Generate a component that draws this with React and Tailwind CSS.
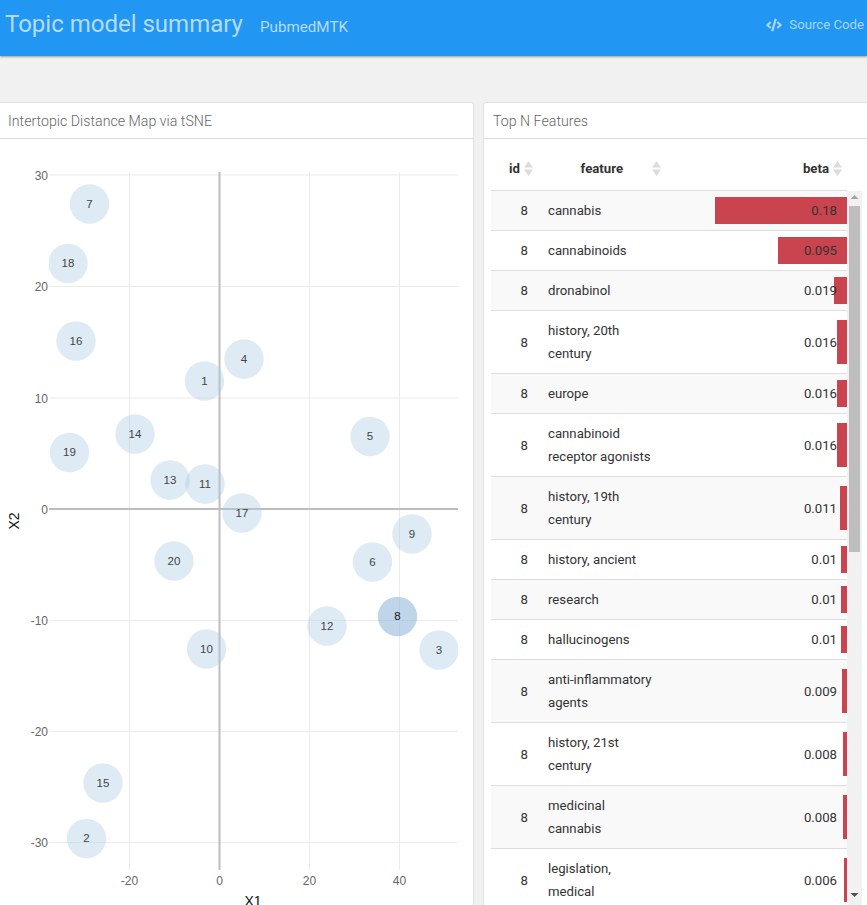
import React from "react";
import { FaCode } from "react-icons/fa";

const topics = [
  { id: 7, x: 89.5, y: 204 },
  { id: 18, x: 68, y: 263.5 },
  { id: 16, x: 76, y: 341 },
  { id: 4, x: 244, y: 359 },
  { id: 1, x: 204.5, y: 381 },
  { id: 14, x: 135, y: 434 },
  { id: 5, x: 370, y: 436.5 },
  { id: 19, x: 69.5, y: 452.5 },
  { id: 13, x: 170, y: 480 },
  { id: 11, x: 205, y: 484 },
  { id: 17, x: 242, y: 513 },
  { id: 9, x: 412, y: 534 },
  { id: 6, x: 372.5, y: 562 },
  { id: 20, x: 174, y: 561 },
  { id: 8, x: 397.5, y: 616.5, active: true },
  { id: 12, x: 327, y: 626 },
  { id: 10, x: 206.5, y: 649 },
  { id: 3, x: 439, y: 650 },
  { id: 15, x: 103, y: 783 },
  { id: 2, x: 86.5, y: 838.5 },
];

const features = [
  { name: ["cannabis"], beta: "0.18", bar: 132 },
  { name: ["cannabinoids"], beta: "0.095", bar: 69 },
  { name: ["dronabinol"], beta: "0.019", bar: 13 },
  { name: ["history, 20th", "century"], beta: "0.016", bar: 10 },
  { name: ["europe"], beta: "0.016", bar: 10 },
  { name: ["cannabinoid", "receptor agonists"], beta: "0.016", bar: 10 },
  { name: ["history, 19th", "century"], beta: "0.011", bar: 7 },
  { name: ["history, ancient"], beta: "0.01", bar: 6 },
  { name: ["research"], beta: "0.01", bar: 6 },
  { name: ["hallucinogens"], beta: "0.01", bar: 6 },
  { name: ["anti-inflammatory", "agents"], beta: "0.009", bar: 5 },
  { name: ["history, 21st", "century"], beta: "0.008", bar: 4 },
  { name: ["medicinal", "cannabis"], beta: "0.008", bar: 4 },
  { name: ["legislation,", "medical"], beta: "0.006", bar: 3 },
];

const xTicks = [
  { label: "-20", x: 129.5 },
  { label: "0", x: 219.5 },
  { label: "20", x: 309.5 },
  { label: "40", x: 399.5 },
];

const yTicks = [
  { label: "30", y: 175 },
  { label: "20", y: 286.5 },
  { label: "10", y: 398 },
  { label: "0", y: 509 },
  { label: "-10", y: 620.5 },
  { label: "-20", y: 731.5 },
  { label: "-30", y: 842.5 },
];

function SortIcon() {
  return (
    <svg width="9" height="15" viewBox="0 0 9 15" className="shrink-0 fill-[#dcdcdc]">
      <path d="M4.5 0 L9 6.5 L0 6.5 Z" />
      <path d="M0 8.5 L9 8.5 L4.5 15 Z" />
    </svg>
  );
}

function TopicMap() {
  return (
    <svg width="473" height="766" viewBox="0 139 473 766" className="block font-['Liberation_Sans',sans-serif]">
      <defs>
        <clipPath id="plot">
          <rect x="49" y="172" width="409" height="698" />
        </clipPath>
      </defs>
      {xTicks.map((t) => (
        <g key={t.label}>
          {t.label !== "0" && <line x1={t.x} x2={t.x} y1="172" y2="870" stroke="#ebebeb" />}
          <text x={t.x} y="884.5" textAnchor="middle" fontSize="12" fill="#666666">{t.label}</text>
        </g>
      ))}
      {yTicks.map((t) => (
        <g key={t.label}>
          {t.label !== "0" && <line x1="49" x2="458" y1={t.y} y2={t.y} stroke="#ebebeb" />}
          <text x="48" y={t.y + 4.5} textAnchor="end" fontSize="12" fill="#666666">{t.label}</text>
        </g>
      ))}
      <line x1="219.5" x2="219.5" y1="172" y2="870" stroke="#bdbdbd" strokeWidth="2" />
      <line x1="49" x2="458" y1="509" y2="509" stroke="#bdbdbd" strokeWidth="2" />
      <g clipPath="url(#plot)">
        {topics.map((t) => (
          <g key={t.id}>
            <circle cx={t.x} cy={t.y} r="19.7" fill={t.active ? "#94bbdc" : "#adcbe4"} fillOpacity={t.active ? 0.6 : 0.4} />
            <text x={t.x} y={t.y + 3.5} textAnchor="middle" fontSize="11.5" fill={t.active ? "#111111" : "#444444"}>{t.id}</text>
          </g>
        ))}
      </g>
      <text x="253" y="906" textAnchor="middle" fontSize="14" fill="#111111">X1</text>
      <text x="19" y="521" textAnchor="middle" fontSize="14" fill="#111111" transform="rotate(-90 19 521)">X2</text>
    </svg>
  );
}

function FeatureRow({ row, index }) {
  const tall = row.name.length > 1;
  return (
    <div className={`flex border-b border-[#dddddd] text-[13.2px] text-[#333333] ${tall ? "h-[63px]" : "h-[40px]"} ${index % 2 === 0 ? "bg-[#f9f9f9]" : "bg-white"}`}>
      <div className={`flex w-[43px] items-center justify-end pr-[6px] ${tall ? "pt-px" : ""}`}>8</div>
      <div className="flex w-[130px] flex-col justify-center pl-[14px] leading-[23px]">
        {row.name.map((line) => (
          <span key={line} className="whitespace-nowrap">{line}</span>
        ))}
      </div>
      <div className={`relative flex flex-1 items-center justify-end pr-[10px] ${tall ? "pt-px" : ""}`}>
        <div className="absolute right-0 top-[15%] h-[70%] bg-[#c9444e]" style={{ width: row.bar }} />
        <span className="relative">{row.beta}</span>
      </div>
    </div>
  );
}

function FakeScrollbar() {
  return (
    <div className="flex w-[15px] shrink-0 flex-col items-center bg-[#f1f1f1]">
      <svg width="9" height="15" viewBox="0 0 9 15" className="shrink-0 fill-[#a3a3a3]">
        <path d="M4.5 4 L8.5 8 L0.5 8 Z" />
      </svg>
      <div className="h-[346px] w-[11px] shrink-0 bg-[#bebebe]" />
      <svg width="9" height="15" viewBox="0 0 9 15" className="mt-[334px] shrink-0 fill-[#505050]">
        <path d="M0.5 7 L8.5 7 L4.5 11 Z" />
      </svg>
    </div>
  );
}

export default function App() {
  return (
    <div className="h-[905px] w-[867px] overflow-hidden bg-[#f1f1f1] font-['Roboto',sans-serif]">
      <header className="flex h-[56px] items-start justify-between bg-[#2196f3] pl-[5px] pr-[3px] shadow-[0_1px_2px_rgba(0,0,0,0.35)]">
        <div className="flex items-baseline gap-[17px] pt-[10px] text-[#b5dcfb]">
          <h1 className="text-[24px] leading-[28px]">Topic model summary</h1>
          <span className="text-[15.2px]">PubmedMTK</span>
        </div>
        <a className="flex items-center gap-[7px] pt-[16px] text-[13.2px] leading-[17px] text-[#a9d6fa]">
          <FaCode className="h-[16px] w-[16px]" />
          Source Code
        </a>
      </header>
      <main className="-ml-[10px] flex gap-[9px] pt-[46px]">
        <section className="h-[830px] w-[484px] shrink-0 rounded-[3px] border border-[#e0e0e0] bg-white">
          <h2 className="flex h-[36px] items-center border-b border-[#dddddd] pl-[17px] pt-[2px] text-[14.2px] font-light text-[#666666]">Intertopic Distance Map via tSNE</h2>
          <div className="ml-[9px]">
            <TopicMap />
          </div>
        </section>
        <section className="h-[830px] w-[420px] shrink-0 rounded-[3px] border border-[#e0e0e0] bg-white">
          <h2 className="flex h-[36px] items-center border-b border-[#dddddd] pl-[9px] pt-[2px] text-[14.2px] font-light text-[#666666]">Top N Features</h2>
          <div className="pl-[7px]">
            <div className="flex h-[52px] w-[356px] items-center border-b border-[#dddddd] pt-[9px] text-[13.2px] font-bold text-[#333333]">
              <div className="flex w-[42px] items-center justify-end gap-[4px]">id<SortIcon /></div>
              <div className="flex w-[128px] items-center justify-end gap-[29px]">feature<SortIcon /></div>
              <div className="flex flex-1 items-center justify-end gap-[4px] pr-[5px]">beta<SortIcon /></div>
            </div>
            <div className="flex">
              <div className="w-[356px] shrink-0">
                {features.map((row, i) => (
                  <FeatureRow key={i} row={row} index={i} />
                ))}
              </div>
              <FakeScrollbar />
            </div>
          </div>
        </section>
      </main>
    </div>
  );
}
